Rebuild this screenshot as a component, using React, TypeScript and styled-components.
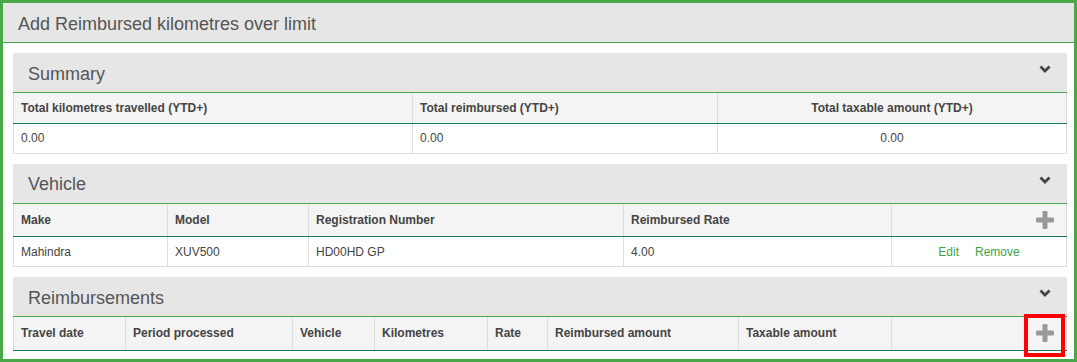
import React from "react";
import styled, { createGlobalStyle, css } from "styled-components";

const GREEN = "#47a947";
const TEAL = "#1c7a5c";

const GlobalStyle = createGlobalStyle`
  html, body {
    margin: 0;
    padding: 0;
    background: #fff;
  }
  body {
    font-family: "Liberation Sans", Arial, sans-serif;
  }
`;

type Column = { label: string; width: number; align?: "left" | "center" };

const summaryColumns: Column[] = [
  { label: "Total kilometres travelled (YTD+)", width: 399 },
  { label: "Total reimbursed (YTD+)", width: 305 },
  { label: "Total taxable amount (YTD+)", width: 349, align: "center" },
];

const vehicleColumns: Column[] = [
  { label: "Make", width: 154 },
  { label: "Model", width: 141 },
  { label: "Registration Number", width: 315 },
  { label: "Reimbursed Rate", width: 268 },
];

const reimbursementColumns: Column[] = [
  { label: "Travel date", width: 112 },
  { label: "Period processed", width: 167 },
  { label: "Vehicle", width: 82 },
  { label: "Kilometres", width: 113 },
  { label: "Rate", width: 60 },
  { label: "Reimbursed amount", width: 191 },
  { label: "Taxable amount", width: 153 },
];

const ChevronDown = () => (
  <svg width="12" height="8" viewBox="0 0 12 8">
    <polyline
      points="1.5,1.5 6,6 10.5,1.5"
      fill="none"
      stroke="#444"
      strokeWidth="2.8"
      strokeLinejoin="miter"
    />
  </svg>
);

const PlusIcon = () => (
  <svg width="18" height="18" viewBox="0 0 18 18">
    <rect x="6.5" y="0" width="5" height="18" rx="1.2" fill="#999" />
    <rect x="0" y="6.5" width="18" height="5" rx="1.2" fill="#999" />
  </svg>
);

const Panel = (props: { title: string; children: React.ReactNode }) => (
  <PanelWrapper>
    <PanelHeader>
      <PanelTitle>{props.title}</PanelTitle>
      <Toggle>
        <ChevronDown />
      </Toggle>
    </PanelHeader>
    {props.children}
  </PanelWrapper>
);

const Cols = (props: { columns: Column[]; actionWidth?: number }) => (
  <colgroup>
    {props.columns.map((c) => (
      <col key={c.label} style={{ width: c.width }} />
    ))}
    {props.actionWidth ? <col style={{ width: props.actionWidth }} /> : null}
  </colgroup>
);

export default function App() {
  return (
    <>
      <GlobalStyle />
      <Frame>
        <TitleBar>Add Reimbursed kilometres over limit</TitleBar>
        <Content>
          <Panel title="Summary">
            <Table>
              <Cols columns={summaryColumns} />
              <thead>
                <HeadRow>
                  {summaryColumns.map((c) => (
                    <HeadCell key={c.label} $align={c.align}>
                      {c.label}
                    </HeadCell>
                  ))}
                </HeadRow>
              </thead>
              <tbody>
                <BodyRow>
                  <Cell>0.00</Cell>
                  <Cell>0.00</Cell>
                  <Cell $align="center">0.00</Cell>
                </BodyRow>
              </tbody>
            </Table>
          </Panel>

          <Panel title="Vehicle">
            <Table>
              <Cols columns={vehicleColumns} actionWidth={175} />
              <thead>
                <HeadRow $tall>
                  {vehicleColumns.map((c) => (
                    <HeadCell key={c.label}>{c.label}</HeadCell>
                  ))}
                  <ActionHeadCell>
                    <AddButton aria-label="Add vehicle">
                      <PlusIcon />
                    </AddButton>
                  </ActionHeadCell>
                </HeadRow>
              </thead>
              <tbody>
                <BodyRow>
                  <Cell>Mahindra</Cell>
                  <Cell>XUV500</Cell>
                  <Cell>HD00HD GP</Cell>
                  <Cell>4.00</Cell>
                  <Cell $align="center">
                    <Actions>
                      <LinkButton>Edit</LinkButton>
                      <LinkButton>Remove</LinkButton>
                    </Actions>
                  </Cell>
                </BodyRow>
              </tbody>
            </Table>
          </Panel>

          <Panel title="Reimbursements">
            <Table>
              <Cols columns={reimbursementColumns} actionWidth={175} />
              <thead>
                <HeadRow $tall>
                  {reimbursementColumns.map((c) => (
                    <HeadCell key={c.label}>{c.label}</HeadCell>
                  ))}
                  <ActionHeadCell>
                    <AddButton aria-label="Add reimbursement" $highlighted>
                      <PlusIcon />
                    </AddButton>
                  </ActionHeadCell>
                </HeadRow>
              </thead>
            </Table>
          </Panel>
        </Content>
      </Frame>
    </>
  );
}

const Frame = styled.div`
  box-sizing: border-box;
  width: 1077px;
  height: 362px;
  border: 3px solid ${GREEN};
  overflow: hidden;
  background: #fff;
`;

const TitleBar = styled.div`
  height: 40px;
  display: flex;
  align-items: center;
  padding: 4px 15px 0 15px;
  box-sizing: border-box;
  background: #e6e6e6;
  border-bottom: 1px solid ${GREEN};
  font-size: 18px;
  color: #555;
`;

const Content = styled.div`
  display: flex;
  flex-direction: column;
  gap: 10px;
  padding: 10px 7px 0 10px;
`;

const PanelWrapper = styled.section``;

const PanelHeader = styled.div`
  height: 40px;
  box-sizing: border-box;
  display: flex;
  justify-content: space-between;
  align-items: center;
  padding: 3px 16px 0 15px;
  background: #e6e6e6;
  border-bottom: 1px solid ${GREEN};
`;

const PanelTitle = styled.h3`
  margin: 0;
  font-size: 18px;
  font-weight: 400;
  color: #555;
`;

const Toggle = styled.span`
  display: flex;
  align-self: flex-start;
  margin-top: 9px;
`;

const Table = styled.table`
  width: 100%;
  table-layout: fixed;
  border-collapse: collapse;
  font-size: 12px;
  color: #444;
`;

const HeadRow = styled.tr<{ $tall?: boolean }>`
  height: ${(p) => (p.$tall ? "33px" : "30px")};
`;

const BodyRow = styled.tr`
  height: 30px;
`;

const cellBase = css`
  padding: 0 7px;
  border-left: 1px solid #ddd;
  border-right: 1px solid #ddd;
  vertical-align: middle;
  white-space: nowrap;
  overflow: hidden;
`;

const HeadCell = styled.th<{ $align?: "left" | "center" }>`
  ${cellBase};
  text-align: ${(p) => p.$align || "left"};
  font-weight: 700;
  background: #f4f4f4;
  border-bottom: 1px solid ${TEAL};
`;

const ActionHeadCell = styled(HeadCell)`
  text-align: right;
  padding-right: 12px;
  overflow: visible;
`;

const Cell = styled.td<{ $align?: "left" | "center" }>`
  ${cellBase};
  text-align: ${(p) => p.$align || "left"};
  border-bottom: 1px solid #ddd;
`;

const Actions = styled.span`
  display: inline-flex;
  gap: 16px;
`;

const LinkButton = styled.a`
  color: #43a443;
  cursor: pointer;
`;

const AddButton = styled.span<{ $highlighted?: boolean }>`
  position: relative;
  display: inline-flex;
  vertical-align: middle;
  cursor: pointer;
  ${(p) =>
    p.$highlighted &&
    css`
      &::after {
        content: "";
        position: absolute;
        left: -12px;
        right: -11px;
        top: -10px;
        bottom: -15px;
        border: 4px solid #f00;
      }
    `}
`;
